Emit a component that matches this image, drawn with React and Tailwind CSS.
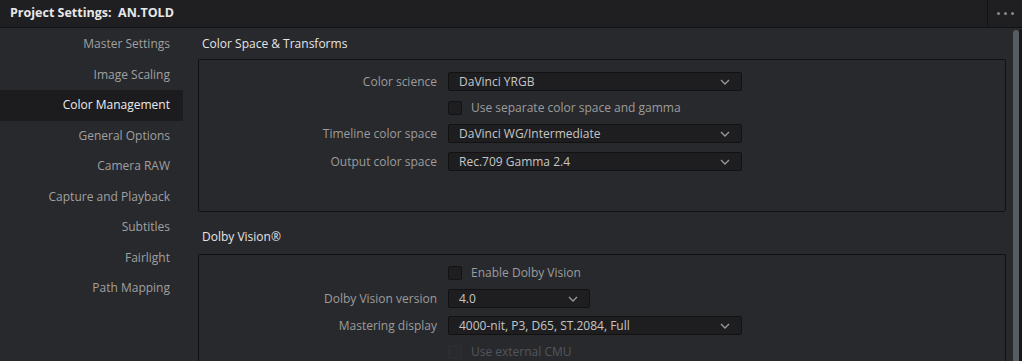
import React from 'react';

const navItems = [
  'Master Settings',
  'Image Scaling',
  'Color Management',
  'General Options',
  'Camera RAW',
  'Capture and Playback',
  'Subtitles',
  'Fairlight',
  'Path Mapping',
];

function Chevron() {
  return (
    <svg width="10" height="6" viewBox="0 0 10 6" className="shrink-0">
      <path d="M1 1 L5 5 L9 1" fill="none" stroke="#9a9a9a" strokeWidth="1.3" />
    </svg>
  );
}

function Dropdown({ value, width = 'w-[294px]' }) {
  return (
    <div className={`${width} h-[19px] flex items-center justify-between pl-[10px] pr-[11px] bg-[#1e1e20] border border-[#121213] rounded-[2px] text-[#c6c6c6]`}>
      <span>{value}</span>
      <Chevron />
    </div>
  );
}

function Row({ label, children, className = '' }) {
  return (
    <div className={`flex items-center h-[19px] ${className}`}>
      <div className="w-[238px] text-right text-[#9c9c9c] shrink-0">{label}</div>
      <div className="ml-[11px] flex items-center">{children}</div>
    </div>
  );
}

function Check({ label, disabled }) {
  return (
    <div className="flex items-center gap-[9px]">
      <div className={`w-[14px] h-[14px] rounded-[2px] border ${disabled ? 'bg-[#2a2b2f] border-[#2e2f33]' : 'bg-[#1e1e20] border-[#131314]'}`} />
      <span className={disabled ? 'text-[#545559]' : 'text-[#9c9c9c]'}>{label}</span>
    </div>
  );
}

export default function App() {
  return (
    <div className="w-[1022px] h-[361px] overflow-hidden bg-[#28292d] flex flex-col text-[12px] leading-none" style={{ fontFamily: '"Open Sans", "Noto Sans", sans-serif' }}>
      {/* Title bar */}
      <div className="h-[28px] shrink-0 flex bg-[#1f1f22] border-b border-[#121214]">
        <div className="flex-1 flex items-center pl-[10px] font-bold text-[12.5px] text-[#e8e8e8] whitespace-pre">Project Settings:  AN.TOLD</div>
        <div className="w-[35px] border-l border-[#121214] flex items-center justify-center gap-[4px]">
          <span className="w-[3px] h-[3px] rounded-full bg-[#8a8a8a]" />
          <span className="w-[3px] h-[3px] rounded-full bg-[#8a8a8a]" />
          <span className="w-[3px] h-[3px] rounded-full bg-[#8a8a8a]" />
        </div>
      </div>

      <div className="flex flex-1 min-h-0">
        {/* Sidebar */}
        <div className="w-[183px] shrink-0 pt-[1px]">
          {navItems.map((item) => {
            const active = item === 'Color Management';
            return (
              <div
                key={item}
                className={`h-[30.5px] flex items-center justify-end pr-[13px] ${active ? 'bg-[#1c1c1f] text-[#ececec]' : 'text-[#a0a0a0]'}`}
              >
                {item}
              </div>
            );
          })}
        </div>

        {/* Main */}
        <div className="flex-1 flex min-w-0">
          <div className="flex-1 pl-[15px] pr-[6px] flex flex-col">
            <div className="h-[31px] flex items-center pl-[4px] text-[#e4e4e4]">Color Space &amp; Transforms</div>
            <div className="h-[153px] shrink-0 border border-[#111113] rounded-[2px] pt-[12px] flex flex-col gap-[7px]">
              <Row label="Color science"><Dropdown value="DaVinci YRGB" /></Row>
              <Row label=""><Check label="Use separate color space and gamma" /></Row>
              <Row label="Timeline color space"><Dropdown value="DaVinci WG/Intermediate" /></Row>
              <Row label="Output color space" className="mt-[2px]"><Dropdown value="Rec.709 Gamma 2.4" /></Row>
            </div>

            <div className="h-[32px] mt-[10px] pb-[2px] flex items-center pl-[4px] text-[#e4e4e4]">Dolby Vision®</div>
            <div className="flex-1 border border-[#111113] border-b-0 rounded-t-[2px] pt-[8px] flex flex-col gap-[7px]">
              <Row label=""><Check label="Enable Dolby Vision" /></Row>
              <Row label="Dolby Vision version"><Dropdown value="4.0" width="w-[142px]" /></Row>
              <Row label="Mastering display" className="mt-[1px]"><Dropdown value="4000-nit, P3, D65, ST.2084, Full" /></Row>
              <Row label=""><Check label="Use external CMU" disabled /></Row>
            </div>
          </div>

          {/* Scrollbar */}
          <div className="w-[10px] shrink-0 flex pt-[2px]">
            <div className="w-[6px] ml-[1px] bg-[#585c63] rounded-t-full" />
            <div className="w-[3px] bg-[#18181a]" />
          </div>
        </div>
      </div>
    </div>
  );
}
